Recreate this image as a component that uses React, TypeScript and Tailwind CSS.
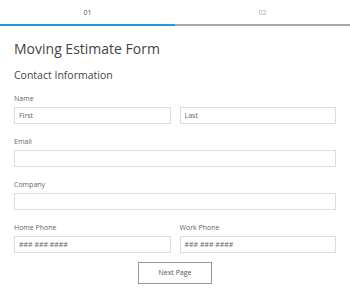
import React from 'react';

const inputClass =
  "block w-full h-[17px] border border-[#dcdcdc] px-[4px] text-[7px] text-[#555] placeholder:text-[#666] outline-none";

const labelClass = "block text-[7px] leading-[10px] text-[#666] mb-[3px]";

const App: React.FC = () => {
  return (
    <div className="w-[350px] h-[299px] bg-white font-['Open_Sans',sans-serif] text-[#444]">
      <div className="flex">
        <div className="w-1/2 h-[26px] pt-[2px] flex items-center justify-center text-[7px] text-[#555] border-b-2 border-[#1a9bd7]">01</div>
        <div className="w-1/2 h-[26px] pt-[2px] flex items-center justify-center text-[7px] text-[#aaa] border-b-2 border-[#a8a8a8]">02</div>
      </div>
      <form className="px-[14px] pt-[14px]">
        <h1 className="text-[14px] leading-[18px] text-[#444]">Moving Estimate Form</h1>
        <h2 className="mt-[10px] text-[10.5px] leading-[14px] text-[#444]">Contact Information</h2>
        <div className="mt-[12px]">
          <label className={labelClass}>Name</label>
          <div className="grid grid-cols-2 gap-[9px]">
            <input type="text" placeholder="First" className={inputClass} />
            <input type="text" placeholder="Last" className={inputClass} />
          </div>
        </div>
        <div className="mt-[13px]">
          <label className={labelClass}>Email</label>
          <input type="email" className={inputClass} />
        </div>
        <div className="mt-[13px]">
          <label className={labelClass}>Company</label>
          <input type="text" className={inputClass} />
        </div>
        <div className="mt-[13px] grid grid-cols-2 gap-[9px]">
          <div>
            <label className={labelClass}>Home Phone</label>
            <input type="tel" placeholder="### ### ####" className={inputClass} />
          </div>
          <div>
            <label className={labelClass}>Work Phone</label>
            <input type="tel" placeholder="### ### ####" className={inputClass} />
          </div>
        </div>
        <div className="mt-[9px] flex justify-center">
          <button type="button" className="w-[74px] h-[22px] border border-[#999] text-[7px] text-[#555] bg-white">Next Page</button>
        </div>
      </form>
    </div>
  );
};

export default App;
